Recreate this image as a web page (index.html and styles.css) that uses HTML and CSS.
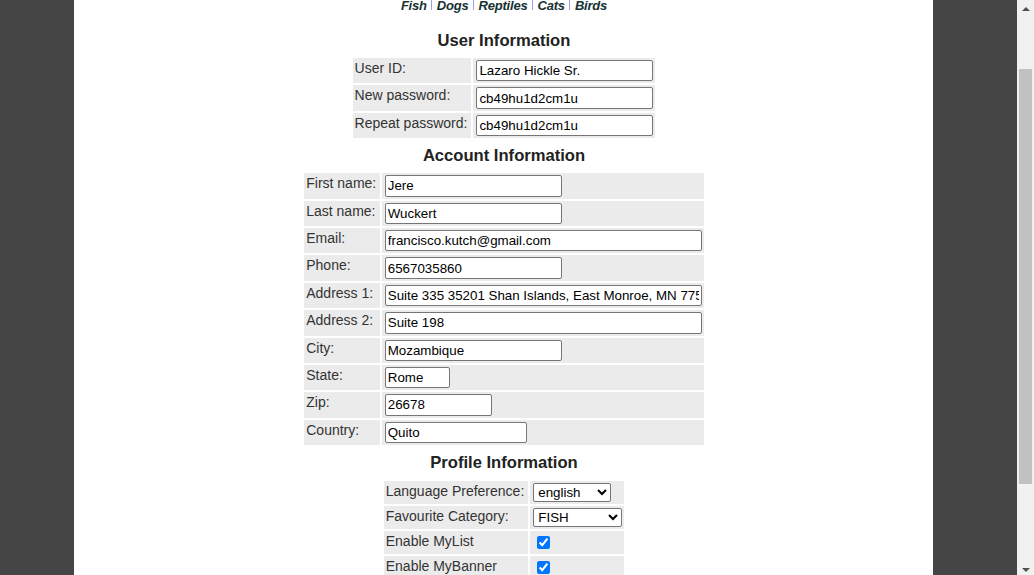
FILE: index.html
```html
<!DOCTYPE html>
<html lang="en">
<head>
<meta charset="utf-8">
<title>Edit Account</title>
<link rel="stylesheet" href="styles.css">
</head>
<body>
<div class="viewport">
  <main class="content">
    <nav class="quicklinks">
      <a href="#">Fish</a><i class="sep"></i>
      <a href="#">Dogs</a><i class="sep"></i>
      <a href="#">Reptiles</a><i class="sep"></i>
      <a href="#">Cats</a><i class="sep"></i>
      <a href="#">Birds</a>
    </nav>

    <h3 class="section-title">User Information</h3>
    <table class="form-table user-table">
      <tr><td class="lbl">User ID:</td><td class="val"><input class="txt w177" type="text" value="Lazaro Hickle Sr."></td></tr>
      <tr><td class="lbl">New password:</td><td class="val"><input class="txt w177" type="text" value="cb49hu1d2cm1u"></td></tr>
      <tr><td class="lbl">Repeat password:</td><td class="val"><input class="txt w177" type="text" value="cb49hu1d2cm1u"></td></tr>
    </table>

    <h3 class="section-title">Account Information</h3>
    <table class="form-table account-table">
      <tr><td class="lbl">First name:</td><td class="val"><input class="txt w177" type="text" value="Jere"></td></tr>
      <tr><td class="lbl">Last name:</td><td class="val"><input class="txt w177" type="text" value="Wuckert"></td></tr>
      <tr><td class="lbl">Email:</td><td class="val"><input class="txt w317" type="text" value="francisco.kutch@gmail.com"></td></tr>
      <tr><td class="lbl">Phone:</td><td class="val"><input class="txt w177" type="text" value="6567035860"></td></tr>
      <tr><td class="lbl">Address 1:</td><td class="val"><input class="txt w317" type="text" value="Suite 335 35201 Shan Islands, East Monroe, MN 77540"></td></tr>
      <tr><td class="lbl">Address 2:</td><td class="val"><input class="txt w317" type="text" value="Suite 198"></td></tr>
      <tr><td class="lbl">City:</td><td class="val"><input class="txt w177" type="text" value="Mozambique"></td></tr>
      <tr><td class="lbl">State:</td><td class="val"><input class="txt w65" type="text" value="Rome"></td></tr>
      <tr><td class="lbl">Zip:</td><td class="val"><input class="txt w107" type="text" value="26678"></td></tr>
      <tr><td class="lbl">Country:</td><td class="val"><input class="txt w142" type="text" value="Quito"></td></tr>
    </table>

    <h3 class="section-title profile-title">Profile Information</h3>
    <table class="form-table profile-table">
      <tr><td class="lbl">Language Preference:</td><td class="val"><select class="sel w78"><option selected>english</option><option>japanese</option></select></td></tr>
      <tr><td class="lbl">Favourite Category:</td><td class="val"><select class="sel w89"><option selected>FISH</option><option>DOGS</option><option>REPTILES</option><option>CATS</option><option>BIRDS</option></select></td></tr>
      <tr><td class="lbl">Enable MyList</td><td class="val"><input class="chk" type="checkbox" checked></td></tr>
      <tr><td class="lbl">Enable MyBanner</td><td class="val"><input class="chk" type="checkbox" checked></td></tr>
    </table>
  </main>
</div>
<div class="scrollbar">
  <div class="sb-btn"><span class="arrow-up"></span></div>
  <div class="sb-track"><div class="sb-thumb"></div></div>
  <div class="sb-btn"><span class="arrow-down"></span></div>
</div>
</body>
</html>
```

FILE: styles.css
```css
html, body {
  margin: 0;
  padding: 0;
  height: 575px;
  overflow: hidden;
}

body {
  display: flex;
  background: #454545;
  font-family: "Liberation Sans", Arial, sans-serif;
}

.viewport {
  flex: 1;
  overflow: hidden;
  background: #454545;
  padding-left: 74px;
}

.content {
  width: 859px;
  min-height: 100%;
  background: #ffffff;
  display: flex;
  flex-direction: column;
  align-items: center;
  padding-left: 1px;
  box-sizing: border-box;
}

/* quick links (scrolled partly out of view) */
.quicklinks {
  display: flex;
  align-items: flex-start;
  gap: 4px;
  margin-top: -2px;
  margin-bottom: 11px;
  height: 16px;
  line-height: 16px;
}

.quicklinks a {
  font-size: 13px;
  font-weight: bold;
  font-style: italic;
  color: #163232;
  text-decoration: none;
  letter-spacing: -0.2px;
}

.quicklinks .sep {
  display: block;
  width: 1px;
  height: 13px;
  margin-top: -1px;
  background: #9e9ef2;
  margin-right: 1px;
}

.section-title {
  margin: 6px 0 5px;
  font-size: 16.6px;
  line-height: 20px;
  font-weight: bold;
  color: #222222;
}

.profile-title {
  margin-bottom: 6px;
}

.form-table {
  border-collapse: separate;
  border-spacing: 2px;
  font-size: 14px;
  color: #333333;
}

.form-table td {
  background: #ebebeb;
  padding: 2px 4px 2px 2px;
  vertical-align: top;
}

.form-table td.val {
  padding: 2px 2px 2px 3px;
  vertical-align: middle;
}

.account-table td.val {
  padding-left: 2.5px;
}

.profile-table td.lbl {
  line-height: 17px;
}

.txt {
  display: block;
  box-sizing: border-box;
  height: 21.4px;
  margin: 0;
  padding: 1px 2px;
  border: 1px solid #767676;
  border-radius: 2px;
  font-family: "Liberation Sans", Arial, sans-serif;
  font-size: 13.333px;
  color: #000000;
  background: #ffffff;
}

.w177 { width: 177px; }
.w317 { width: 317px; }
.w65 { width: 65px; }
.w107 { width: 107px; }
.w142 { width: 142px; }

.sel {
  display: block;
  box-sizing: border-box;
  height: 19px;
  margin: 0;
  font-family: "Liberation Sans", Arial, sans-serif;
  font-size: 13.333px;
  color: #000000;
  background: #ffffff;
  border: 1px solid #767676;
  border-radius: 2px;
}

.w78 { width: 78px; }
.w89 { width: 89px; }

.chk {
  display: block;
  width: 13px;
  height: 13px;
  margin: 3px 3px 3px 4px;
}

/* fake scrollbar */
.scrollbar {
  width: 17px;
  height: 575px;
  background: #f1f1f1;
  display: flex;
  flex-direction: column;
}

.sb-btn {
  height: 17px;
  display: flex;
  align-items: center;
  justify-content: center;
}

.arrow-up, .arrow-down {
  width: 0;
  height: 0;
  border-left: 4px solid transparent;
  border-right: 4px solid transparent;
}

.arrow-up {
  border-bottom: 4px solid #505050;
}

.arrow-down {
  border-top: 4px solid #505050;
  margin-top: 7px;
}

.sb-track {
  flex: 1;
  padding: 52px 2px 0;
}

.sb-thumb {
  width: 13px;
  height: 415px;
  background: #c1c1c1;
}
```
